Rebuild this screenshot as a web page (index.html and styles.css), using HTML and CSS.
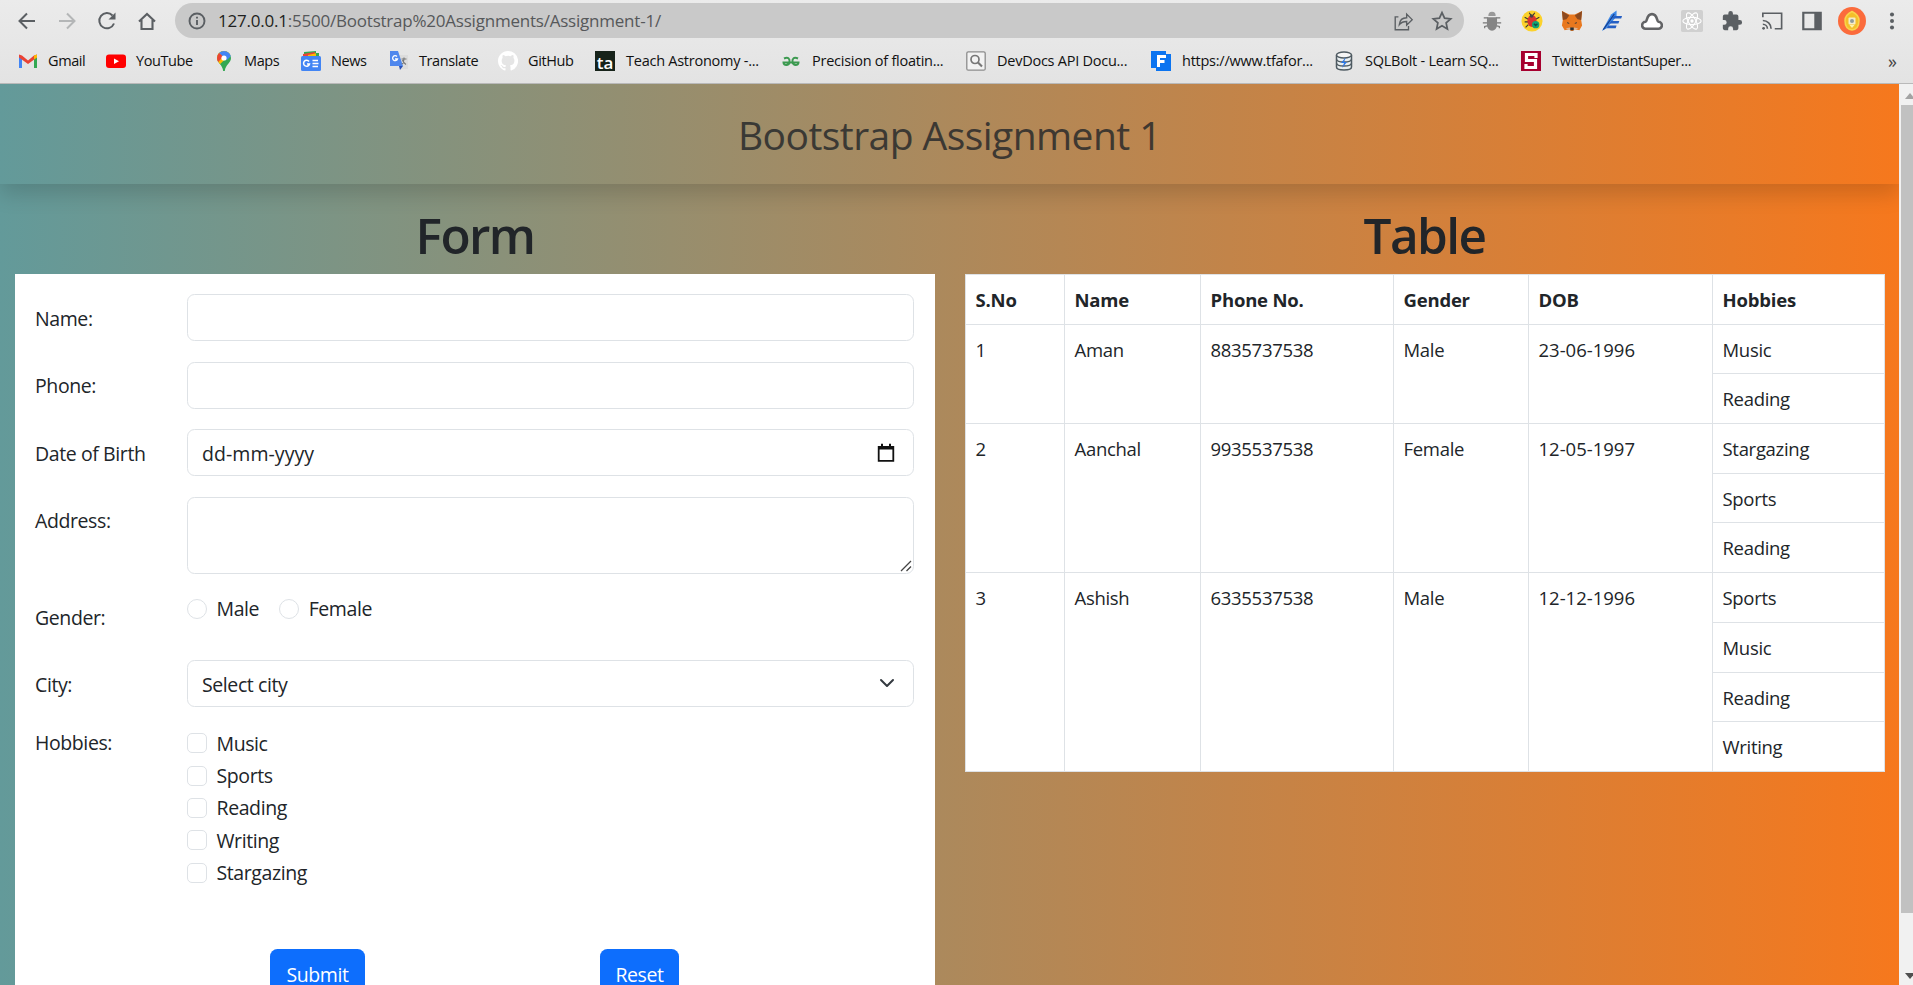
FILE: index.html
```
<!DOCTYPE html>
<html lang="en">
<head>
<meta charset="utf-8">
<title>Bootstrap Assignment 1</title>
<link rel="stylesheet" href="styles.css">
</head>
<body>
<header class="chrome">
  <div class="toolbar">
    <nav class="nav">
      <svg class="ic" viewBox="0 0 24 24"><path d="M20 12H5M12 4.500L4.500 12l7.500 7.500" fill="none" stroke="#5b5f63" stroke-width="2"/></svg>
      <svg class="ic" viewBox="0 0 24 24"><path d="M4 12h15M12 4.500l7.500 7.500-7.500 7.500" fill="none" stroke="#b4b6b7" stroke-width="2"/></svg>
      <svg class="ic" viewBox="0 0 24 24"><path d="M17.500 6.500A7.600 7.600 0 1 0 19 14.500" fill="none" stroke="#5b5f63" stroke-width="2"/><path d="M20.500 3.500v7H13.500z" fill="#5b5f63"/></svg>
      <svg class="ic" viewBox="0 0 24 24"><path d="M4 12.500L12 5l8 7.500M6.500 11v9h11v-9" fill="none" stroke="#5b5f63" stroke-width="2.100"/></svg>
    </nav>
    <div class="address">
      <svg class="info" viewBox="0 0 20 20"><circle cx="10" cy="10" r="7.500" fill="none" stroke="#5b5f63" stroke-width="1.900"/><path d="M10 9v5M10 5.800v1.800" stroke="#5b5f63" stroke-width="1.900"/></svg>
      <span class="url"><b>127.0.0.1</b>:5500/Bootstrap%20Assignments/Assignment-1/</span>
      <svg class="act" viewBox="0 0 24 24"><path d="M7 7.500H3.500V21.500H18v-4M8 16c.5-5 3.500-7.500 8-7.500V4.500l6 6-6 6v-4c-4 0-6 .8-8 3.500z" fill="none" stroke="#5b5f63" stroke-width="1.500"/></svg>
      <svg class="act" viewBox="0 0 24 24"><path d="M12 2.800l2.800 6.100 6.700.7-5 4.500 1.400 6.600L12 17.300l-5.900 3.400 1.400-6.600-5-4.500 6.700-.7z" fill="none" stroke="#5b5f63" stroke-width="1.900"/></svg>
    </div>
    <div class="exts">
      <svg class="ext" viewBox="0 0 24 24"><g stroke="#777" stroke-width="1.300" fill="none"><path d="M3 8.500h4l2 2M2 14h5M4 20v-2l4-1M21 8.500h-4l-2 2M22 14h-5M20 20v-2l-4-1"/></g><path d="M8 6.500a4 4.500 0 0 1 8 0z" fill="#999"/><path d="M6.500 8h11v8a5.500 6.500 0 0 1-11 0z" fill="#858585"/></svg>
      <svg class="ext" viewBox="0 0 24 24"><circle cx="12" cy="12" r="11.500" fill="#fcd22c"/><path d="M4 8l4 2M4 13h4M5 19l3-3M20 8l-4 2M9 3l2 3M15 3l-2 3" stroke="#333" stroke-width="1.200"/><ellipse cx="12" cy="12" rx="5" ry="6.500" fill="#d8342f"/><circle cx="11.500" cy="6.500" r="2" fill="#444"/><circle cx="16" cy="16" r="4" fill="#13a474"/><path d="M14 15l2 2 2-2" stroke="#14534a" stroke-width="1.500" fill="none"/></svg>
      <svg class="ext" viewBox="0 0 24 24"><path d="M1 1l8 4h6l8-4-1 10 1 6-3 5-5-1-2 2h-2l-2-2-5 1-3-5 1-6z" fill="#e8781f"/><path d="M1 1l8 5-3 4-4 1zM23 1l-8 5 3 4 4 1z" fill="#8c4a20"/><path d="M6.500 13l3 1.500-2 .5zM17.500 13l-3 1.500 2 .5zM10 19h4v3h-4z" fill="#27323c"/><path d="M5 20l5-1v3zM19 20l-5-1v3z" fill="#dbb596"/></svg>
      <svg class="ext" viewBox="0 0 24 24"><path d="M1 23L11 5l6-4.500V7L6 20z" fill="#3b87e8"/><path d="M2.500 21.500L14.500 4.500" stroke="#173f8e" stroke-width="1.300"/><path d="M14 6.500h9l-1 2.800H12zM11 12h9l-1 2.800H9zM8 17h9l-1 2.800H6z" fill="#255fc4"/></svg>
      <svg class="ext" viewBox="0 0 24 24"><path d="M5 20.500a3.800 3.800 0 0 1 0-7.600C6.800 12.500 6 4.500 12 4.500s5.200 8 7 8.400a3.800 3.800 0 0 1 0 7.600z" fill="#fff" stroke="#626365" stroke-width="2.800"/></svg>
      <svg class="ext" viewBox="0 0 24 24"><rect width="24" height="24" rx="2" fill="#d0d0d0"/><g fill="none" stroke="#fff" stroke-width="1.200"><ellipse cx="12" cy="12" rx="10" ry="4"/><ellipse cx="12" cy="12" rx="10" ry="4" transform="rotate(60 12 12)"/><ellipse cx="12" cy="12" rx="10" ry="4" transform="rotate(120 12 12)"/></g><circle cx="12" cy="12" r="1.800" fill="#fff"/></svg>
      <svg class="ext" viewBox="0 0 24 24"><path d="M20.500 11H19V7a2 2 0 0 0-2-2h-4V3.500a2.500 2.500 0 0 0-5 0V5H4a2 2 0 0 0-2 2v3.800h1.500a2.700 2.700 0 0 1 0 5.400H2V20a2 2 0 0 0 2 2h3.800v-1.500a2.700 2.700 0 0 1 5.400 0V22H17a2 2 0 0 0 2-2v-4h1.500a2.500 2.500 0 0 0 0-5z" fill="#5b5f63"/></svg>
      <svg class="ext" viewBox="0 0 24 24"><path d="M2 8V3.500h20.500v17H15" fill="none" stroke="#5b5f63" stroke-width="1.800"/><path d="M2 11.500a9 9 0 0 1 9 9M2 15.500a5 5 0 0 1 5 5" fill="none" stroke="#5b5f63" stroke-width="1.800"/><circle cx="2.800" cy="20" r="1.500" fill="#5b5f63"/></svg>
      <svg class="ext" viewBox="0 0 24 24"><path d="M2.500 3h19v18h-19z" fill="none" stroke="#5b5f63" stroke-width="2.400"/><path d="M14.500 3h7v18h-7z" fill="#5b5f63"/></svg>
      <svg class="ext avatar" viewBox="0 0 28 28"><circle cx="14" cy="14" r="14" fill="#fb6b3c"/><path d="M14 4.500c3 1.500 7 4.500 7 9 0 6-3 9-7 9.500-4-.5-7-3.500-7-9.500 0-4.500 4-7.500 7-9z" fill="#f4bf2a" stroke="#f9d44b" stroke-width="1.500"/><rect x="10.500" y="10.500" width="7" height="7" rx="1" fill="#f5ecc8"/><circle cx="14" cy="14" r="2" fill="#8f9c9c"/><path d="M11.500 18h5L14 21z" fill="#fff3a8"/></svg>
      <svg class="ext" viewBox="0 0 24 24"><g fill="#5b5f63"><circle cx="12" cy="5" r="2.200"/><circle cx="12" cy="12" r="2.200"/><circle cx="12" cy="19" r="2.200"/></g></svg>
    </div>
  </div>
  <div class="bookmarks">
    <a class="bm"><svg viewBox="0 0 20 20"><path d="M1 17V5l3 2v10z" fill="#4285f4"/><path d="M16 17V7l3-2v12z" fill="#34a853"/><path d="M1 3.500l3 1 6 5 6-5 3-1v3L10 13 1 6.500z" fill="#ea4335"/><path d="M16 4.500l3-1v3l-3 2z" fill="#fbbc04"/></svg>Gmail</a>
    <a class="bm"><svg viewBox="0 0 20 20"><rect y="3.500" width="20" height="13.500" rx="3" fill="#f00"/><path d="M8 7.500l5 2.800-5 2.800z" fill="#fff"/></svg>YouTube</a>
    <a class="bm"><svg viewBox="0 0 20 20"><clipPath id="pin"><path d="M10 0a7 7 0 0 1 7 7c0 5-5.500 6.500-6.200 13H9.200C8.500 13.500 3 12 3 7a7 7 0 0 1 7-7z"/></clipPath><g clip-path="url(#pin)"><path d="M0 0h20v20H0z" fill="#34a853"/><path d="M0 0h20L4 15z" fill="#fbbc04"/><path d="M3 0h16v3l-6 6-5-4z" fill="#4285f4"/><path d="M0 1h4l5 4.500-6 7H0z" fill="#ea4335"/></g><circle cx="10" cy="7" r="2.600" fill="#fff"/></svg>Maps</a>
    <a class="bm"><svg viewBox="0 0 20 20"><path d="M3 1l12-1v8H3z" fill="#34a853"/><path d="M2 3l12-2v8H2z" fill="#ea4335"/><path d="M7 4l9-2v6H7z" fill="#fbbc04"/><path d="M15 2h3v4h-3z" fill="#34a853"/><rect y="5" width="20" height="15" rx="1.500" fill="#4285f4"/><path d="M8 10.500A3 3 0 1 0 8.500 13H6M11.500 9.500H17M11.500 12.500h6M11.500 15.500H17" fill="none" stroke="#fff" stroke-width="1.500"/></svg>News</a>
    <a class="bm"><svg viewBox="0 0 20 20"><path d="M8 4h11v14H11z" fill="#dcdcdc"/><path d="M1 0h8l5 15H1z" fill="#4f87ed"/><path d="M10 15h4l-3 4z" fill="#2b52b8"/><path d="M8 5.500A2.500 2.500 0 1 0 8.500 8H6" fill="none" stroke="#fff" stroke-width="1.300"/><path d="M12.500 8h5M15 6.500V8c0 2-1 4-2 5M13.500 9c.5 2 2 3.500 3.500 4.500" fill="none" stroke="#777" stroke-width="1.100"/></svg>Translate</a>
    <a class="bm"><svg viewBox="0 0 16 16"><path fill="#fff" d="M8 0C3.580 0 0 3.580 0 8c0 3.540 2.290 6.530 5.470 7.590.4.070.55-.17.55-.38v-1.490c-2.010.37-2.530-.49-2.690-.94-.09-.23-.48-.94-.82-1.130-.28-.15-.68-.52-.01-.53.63-.01 1.080.58 1.230.82.72 1.210 1.870.87 2.330.66.070-.52.280-.87.510-1.070-1.780-.2-3.640-.89-3.640-3.950 0-.87.310-1.590.82-2.150-.08-.2-.36-1.020.08-2.120 0 0 .67-.21 2.200.82a7.600 7.600 0 0 1 4 0c1.530-1.040 2.200-.82 2.200-.82.44 1.100.16 1.920.08 2.120.51.56.82 1.270.82 2.150 0 3.070-1.870 3.750-3.650 3.950.29.250.54.730.54 1.480v2.200c0 .21.150.46.550.38A8 8 0 0 0 8 0z"/></svg>GitHub</a>
    <a class="bm"><span class="ta">ta</span>Teach Astronomy -...</a>
    <a class="bm"><svg viewBox="0 0 20 20"><g fill="none" stroke="#3c9a50" stroke-width="2"><path d="M3 7.500c4-2 6 0 5.500 3.500-.5 4-6 4-6 .5h15c0 3.500-5.500 3.500-6-.5C11 7.500 13 5.500 17 7.500"/></g></svg>Precision of floatin...</a>
    <a class="bm"><svg viewBox="0 0 20 20"><rect x=".8" y=".8" width="18.400" height="18.400" rx="1.500" fill="#f2f2f2" stroke="#8c8c8c" stroke-width="1.300"/><circle cx="9" cy="8.500" r="4" fill="none" stroke="#777" stroke-width="1.700"/><path d="M12 11.500l4 4" stroke="#777" stroke-width="2.200"/></svg>DevDocs API Docu...</a>
    <a class="bm"><svg viewBox="0 0 20 20"><path d="M0 0h15v3h5v17H5v-3H0z" fill="#0b74f0"/><path d="M7.500 16V5.500H15M7.500 10.500h6" fill="none" stroke="#fff" stroke-width="3"/></svg>https://www.tfafor...</a>
    <a class="bm"><svg viewBox="0 0 20 20"><path d="M2.500 4v12c0 4 15 4 15 0V4" fill="#e8eef0" stroke="#4e5a61" stroke-width="1.500"/><ellipse cx="10" cy="4" rx="7.500" ry="3" fill="#f5f5f5" stroke="#4e5a61" stroke-width="1.500"/><path d="M2.500 8c0 4 15 4 15 0M2.500 12c0 4 15 4 15 0" fill="none" stroke="#4e5a61" stroke-width="1.300"/><path d="M12 6l-5 6h3l-2 5 5-6h-3z" fill="#2b77e5"/></svg>SQLBolt - Learn SQ...</a>
    <a class="bm"><svg viewBox="0 0 20 20"><rect width="20" height="20" fill="#a6002f"/><path d="M15 7V3.500H5.500v6h9v7H5V13" fill="none" stroke="#fff" stroke-width="3.200"/></svg>TwitterDistantSuper...</a>
    <span class="more">»</span>
  </div>
</header>

<div class="viewport">
  <main class="page">
    <div class="banner"><h2 class="banner-title">Bootstrap Assignment 1</h2></div>
    <div class="columns">
      <section class="col">
        <h1 class="heading">Form</h1>
        <form class="card">
          <div class="row"><label class="lbl" for="name">Name:</label><input class="control" id="name" type="text"></div>
          <div class="row"><label class="lbl" for="phone">Phone:</label><input class="control" id="phone" type="text"></div>
          <div class="row"><span class="lbl">Date of Birth</span>
            <div class="control picker date"><span>dd-mm-yyyy</span>
              <svg class="cal" viewBox="0 0 18 20"><path d="M1.700 4h14.600v13.800H1.700z" fill="none" stroke="#111" stroke-width="1.800"/><path d="M1 3h16v3.500H1zM4 .8h2V4H4zM12 .8h2V4h-2z" fill="#111"/></svg></div></div>
          <div class="row row-address"><span class="lbl">Address:</span><div class="control area"><svg class="grip" viewBox="0 0 12 12"><path d="M1 11L11 1M6.500 11L11 6.500" stroke="#444" stroke-width="1.300"/></svg></div></div>
          <div class="row row-gender"><span class="lbl">Gender:</span>
            <div class="radios"><label class="check"><i class="dot"></i>Male</label><label class="check"><i class="dot"></i>Female</label></div></div>
          <div class="row row-city"><span class="lbl">City:</span>
            <div class="control picker"><span>Select city</span>
              <svg class="chev" viewBox="0 0 16 16"><path d="M2 5l6 6 6-6" fill="none" stroke="#343a40" stroke-width="2" stroke-linecap="round" stroke-linejoin="round"/></svg></div></div>
          <div class="row row-hobbies"><span class="lbl">Hobbies:</span>
            <div class="checks">
              <label class="check"><i class="box"></i>Music</label>
              <label class="check"><i class="box"></i>Sports</label>
              <label class="check"><i class="box"></i>Reading</label>
              <label class="check"><i class="box"></i>Writing</label>
              <label class="check"><i class="box"></i>Stargazing</label>
            </div></div>
          <div class="buttons"><button type="button" class="btn submit">Submit</button><button type="button" class="btn reset">Reset</button></div>
        </form>
      </section>
      <section class="col">
        <h1 class="heading">Table</h1>
        <table class="table">
          <colgroup><col class="c1"><col class="c2"><col class="c3"><col class="c4"><col class="c5"><col class="c6"></colgroup>
          <thead><tr><th>S.No</th><th>Name</th><th>Phone No.</th><th>Gender</th><th>DOB</th><th>Hobbies</th></tr></thead>
          <tbody>
            <tr><td rowspan="2">1</td><td rowspan="2">Aman</td><td rowspan="2">8835737538</td><td rowspan="2">Male</td><td rowspan="2" class="dob">23-06-1996</td><td>Music</td></tr>
            <tr><td>Reading</td></tr>
            <tr><td rowspan="3">2</td><td rowspan="3">Aanchal</td><td rowspan="3">9935537538</td><td rowspan="3">Female</td><td rowspan="3" class="dob">12-05-1997</td><td>Stargazing</td></tr>
            <tr><td>Sports</td></tr>
            <tr><td>Reading</td></tr>
            <tr><td rowspan="4">3</td><td rowspan="4">Ashish</td><td rowspan="4">6335537538</td><td rowspan="4">Male</td><td rowspan="4" class="dob">12-12-1996</td><td>Sports</td></tr>
            <tr><td>Music</td></tr>
            <tr><td>Reading</td></tr>
            <tr><td>Writing</td></tr>
          </tbody>
        </table>
      </section>
    </div>
  </main>
  <div class="scrollbar">
    <svg class="arrow" viewBox="0 0 12 18"><path d="M4 12l5-6 5 6z" fill="#a3a3a3"/></svg>
    <div class="thumb"></div>
    <svg class="arrow down" viewBox="0 0 12 18"><path d="M4 6l5 6 5-6z" fill="#505050"/></svg>
  </div>
</div>
</body>
</html>
```
FILE: styles.css
```
* { box-sizing: border-box; }
body {
  margin: 0;
  width: 1913px;
  height: 985px;
  overflow: hidden;
  display: flex;
  flex-direction: column;
  font-family: "Open Sans", "Noto Sans", sans-serif;
  color: #212529;
}

/* Browser chrome */
.chrome {
  flex: none;
  height: 84px;
  background: linear-gradient(#ebebeb, #e3e3e3);
  border-bottom: 1px solid #b9b9b9;
}
.toolbar { display: flex; align-items: center; height: 41px; }
.nav { display: flex; gap: 16px; padding-left: 15px; width: 175px; flex: none; }
.ic { width: 24px; height: 24px; flex: none; }
.address {
  display: flex;
  align-items: center;
  width: 1289px;
  height: 35px;
  border-radius: 18px;
  background: #c9c9c9;
  padding: 0 11px 0 12px;
}
.info { width: 20px; height: 20px; margin-right: 11px; }
.url { flex: 1; font-size: 17px; letter-spacing: -.22px; color: #56585a; white-space: nowrap; }
.url b { font-weight: 400; color: #1e1f20; }
.act { width: 22px; height: 22px; margin-left: 17px; }
.exts { display: flex; align-items: center; gap: 18px; padding-left: 17px; }
.ext { width: 22px; height: 22px; flex: none; }
.ext.avatar { width: 28px; height: 28px; margin: 0 -3px; }
.bookmarks { display: flex; align-items: center; height: 39px; padding-left: 18px; }
.bm {
  display: flex;
  align-items: center;
  gap: 11px;
  flex: none;
  width: 88px;
  font-size: 14.500px;
  line-height: 20px;
  letter-spacing: -.25px;
  color: #111;
  white-space: nowrap;
}
.bm svg { width: 20px; height: 20px; flex: none; }
.bm:nth-child(-n+6) { letter-spacing: -.4px; gap: 10px; }
.bm:nth-child(2) { width: 108px; }
.bm:nth-child(3) { width: 87px; }
.bm:nth-child(4) { width: 88px; }
.bm:nth-child(5) { width: 109px; }
.bm:nth-child(6) { width: 97px; }
.bm:nth-child(7) { width: 186px; }
.bm:nth-child(8) { width: 185px; }
.bm:nth-child(9) { width: 185px; }
.bm:nth-child(10) { width: 183px; }
.bm:nth-child(11) { width: 187px; }
.bm:nth-child(12) { width: 367px; letter-spacing: -.35px; }
.ta {
  width: 20px;
  height: 20px;
  flex: none;
  background: #17231a;
  color: #fff;
  font-size: 17px;
  font-weight: 600;
  line-height: 23px;
  letter-spacing: 0;
  text-align: center;
}
.more { font-size: 18px; line-height: 20px; color: #444; }

/* Page */
.viewport { flex: 1; display: flex; min-height: 0; }
.page {
  width: 1899px;
  overflow: hidden;
  background: linear-gradient(to right, #639a9a, #f6781d);
}
.banner {
  height: 100px;
  display: flex;
  align-items: center;
  justify-content: center;
  box-shadow: 0 10px 20px rgba(0, 0, 0, .15);
}
.banner-title { margin: 0; font-size: 39px; font-weight: 400; letter-spacing: -.55px; opacity: .8; }
.columns { display: grid; grid-template-columns: 920px 919px; gap: 30px; padding: 20px 15px 0; }
.heading { margin: 0; height: 70px; font-size: 49.500px; line-height: 62px; font-weight: 600; text-align: center; letter-spacing: -1.600px; }
.card { height: 900px; background: #fff; padding: 20px 21px 20px 20px; font-size: 19.500px; letter-spacing: -.4px; }
.row { display: flex; height: 67.500px; }
.lbl { width: 152px; flex: none; line-height: 27px; padding-top: 10.500px; }
.control {
  width: 727px;
  height: 47px;
  border: 1px solid #dee2e6;
  border-radius: 7.500px;
  background: #fff;
}
.picker { display: flex; align-items: center; justify-content: space-between; padding: 2px 18px 0 14px; }
.date { letter-spacing: .05px; }
.cal { width: 18px; height: 20px; margin-top: -2px; }
.chev { width: 16px; height: 16px; margin-top: -3px; }
.row-address { height: 97px; }
.row-address .lbl { padding-top: 10px; }
.area { height: 77px; display: flex; align-items: flex-end; justify-content: flex-end; padding: 1px; }
.grip { width: 12px; height: 12px; }
.row-gender { height: 66.500px; }
.row-city { height: 67px; }
.radios { display: flex; gap: 20px; margin-top: -1px; }
.check { display: flex; align-items: center; height: 32.400px; }
.dot, .box { width: 20px; height: 20px; border: 1px solid #dee2e6; border-radius: 50%; margin-right: 9.500px; flex: none; }
.box { border-radius: 5px; }
.row-hobbies { height: 222px; }
.row-hobbies .lbl { padding-top: 2px; }
.buttons { display: flex; padding-left: 235px; }
.btn { height: 47px; border: 0; border-radius: 7.500px; background: #0d6efd; color: #fff; font: inherit; letter-spacing: inherit; padding: 3px 0 0; }
.submit { width: 95px; margin-right: 235px; }
.reset { width: 79px; }

.table { width: 919px; table-layout: fixed; border-collapse: collapse; background: #fff; font-size: 18.500px; letter-spacing: -.3px; }
.table th, .table td { border: 1px solid #dee2e6; text-align: left; vertical-align: top; padding: 12px 9.500px 0; height: 49.700px; line-height: 26px; }
.table th { font-weight: 700; letter-spacing: -.2px; }
.table .dob { letter-spacing: 0; }
.c1 { width: 99px; }
.c2 { width: 136px; }
.c3 { width: 193px; }
.c4 { width: 135px; }
.c5 { width: 184px; }
.c6 { width: 172px; }

.scrollbar { width: 14px; background: #f1f1f1; display: flex; flex-direction: column; padding-left: 2px; }
.arrow { width: 12px; height: 18px; margin: 3px 0 0; flex: none; }
.thumb { height: 808px; background: #c1c1c1; }
.down { margin-top: auto; }
```
